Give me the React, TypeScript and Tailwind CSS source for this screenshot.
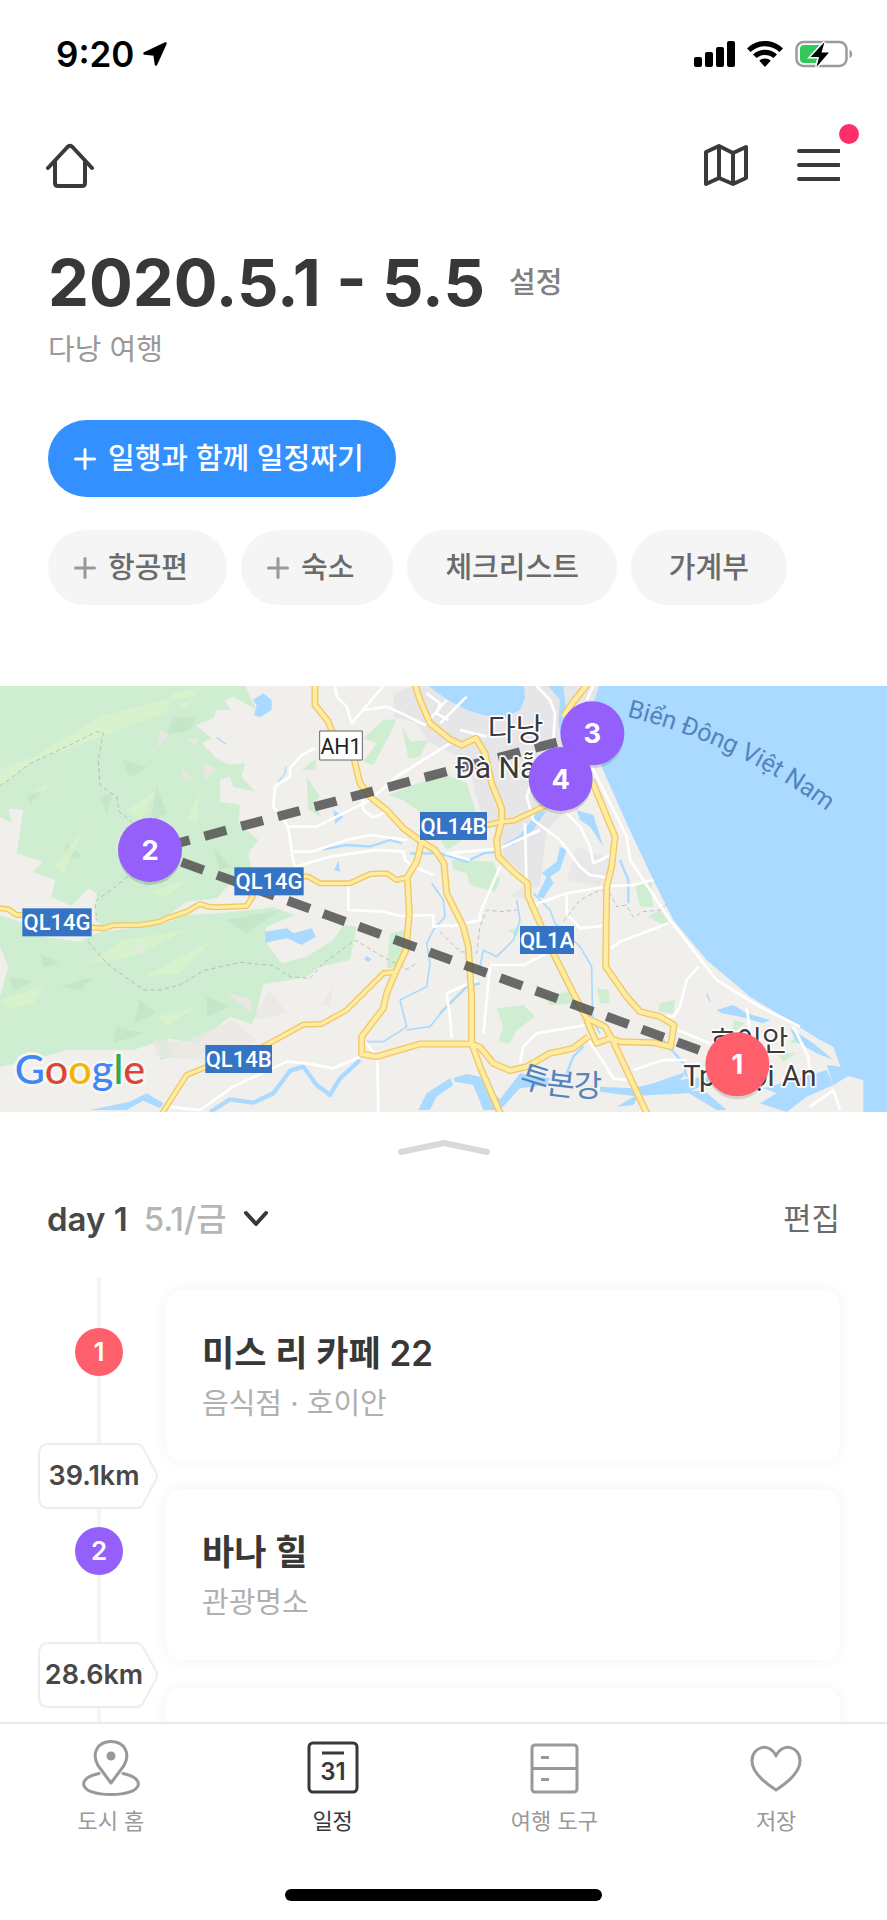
import clsx from 'clsx';
import type { ReactNode } from 'react';

type StopColor = 'red' | 'purple';

interface Stop {
  id: number;
  name?: string;
  detail?: string;
  color: StopColor;
  distance?: string;
}

const stops: Stop[] = [
  { id: 1, name: '미스 리 카페 22', detail: '음식점 · 호이안', color: 'red', distance: '39.1km' },
  { id: 2, name: '바나 힐', detail: '관광명소', color: 'purple', distance: '28.6km' },
  { id: 3, color: 'purple' },
];

const chips = [
  { label: '항공편', add: true },
  { label: '숙소', add: true },
  { label: '체크리스트', add: false },
  { label: '가계부', add: false },
];

const HIGHWAYS = [
  'M945 0 V75 L985 125 1000 165 1062 235 1080 310 1115 355 1160 390 1210 445 1265 485 1305 510 1332 550 1340 640 1390 740 1405 800 1415 950 V1090 L1440 1160 1505 1310',
  'M1265 485 L1250 545 1222 592 1228 700 1218 810 1185 880 1160 940 1150 985 1085 1070 V1122 L1130 1130 1260 1092 H1415 L1440 1102 1480 1150 1530 1172 1580 1160 1650 1120 1720 1105 1765 1070',
  'M1240 0 L1260 60 1290 130 1350 178 1385 195 1428 175 1455 220 1475 310 1505 385 V425 L1490 480 1495 530 1540 575 1582 610 1585 650 1620 730 1660 820 1720 940 1760 1015 1815 1040 1840 1085 1945 1310',
  'M1765 0 L1755 22 1720 65 1690 110 M1775 300 L1845 470 1835 560 1820 620 1817 860 1880 950 1920 995 1980 1010 2022 1035 2012 1100 1960 1088 1860 1085 1830 1075 1790 1090 1760 1020',
];

const MINOR_HIGHWAYS = [
  'M900 588 L925 590 960 610 H1050 L1110 582 1160 580 1190 600 1222 592',
  'M0 685 L25 688 50 705 H90 M270 742 L310 745 340 736 420 735 480 725 500 715 560 695 600 672 625 680 650 682 740 678 758 650 750 640',
  'M480 1310 L560 1185 620 1160 M780 1105 L910 1034 965 1032 1040 990 1150 880 1185 876',
  'M1450 438 L1505 425 1540 422 1630 380 1680 360',
];

const STREETS = [
  'M1150 18 L1055 130 1040 80 1010 50 1005 18',
  'M1095 90 L1160 80 1205 100 1275 135 1340 60',
  'M945 205 L905 225 870 265 870 290 825 320 820 380 865 440 950 440 1110 360 1190 290 1350 190',
  'M865 440 L875 515 935 515 1040 480 1110 465 1220 480 M1060 240 L1085 330 1090 390 1120 412 1160 395',
  'M875 520 L885 560 990 530 1130 510 1210 515 1215 540 1240 560 1300 585',
  'M1045 615 V690 L1150 695 1200 708 1300 705 1300 740 1350 735',
  'M1280 40 L1320 70 1310 100 1345 120 M1320 130 L1400 50 M1380 150 L1460 170',
  'M1610 18 L1650 60 1665 100 1660 180 1600 290 1580 350 1600 420 1680 480 1740 560 1770 585 1820 592',
  'M1780 18 L1760 60 M1775 260 L1880 470 1890 540 2010 720 2095 830 2150 900 2270 975 2400 1040',
  'M1410 540 L1340 520 1500 505 1620 450 M1500 560 L1440 700 1440 720 1350 740',
  'M1600 675 L1700 640 1830 618 1900 615 1960 600 M1700 640 L1700 700 1740 745 1830 735',
  'M1832 805 L1860 785 2005 730 M2095 860 L2060 900 2040 980 2020 1010 1980 1010',
  'M1470 860 L1450 1060 M1470 855 H1570 L1640 820 M1430 900 L1340 940 1350 1010 1355 1075',
  'M1560 1150 L1570 1100 1610 1060 1760 1035 M1765 1080 L1800 1130 1840 1195 1880 1200',
  'M500 1280 L600 1290 700 1220 860 1145 920 1150 1000 1165 1080 1130 M1090 1080 L1132 1130 1135 1296',
  'M2020 1045 L2130 1090 M1900 1170 L1990 1140 2060 1140 M2240 985 L2250 1050 2180 1060',
  'M2380 1040 L2425 1130 2430 1180 M2430 1280 L2500 1230 2520 1290 M1575 430 L1580 640 1610 680',
  'M1700 400 L1740 440 1770 500 1780 550 1840 520',
];

const BORDERS = [
  'M0 318 L95 248 210 195 290 155 310 158 295 240 300 315 350 350 358 395 400 430',
  'M400 575 L340 625 285 665 290 720 M265 785 L320 850 430 930 480 930 540 915 610 872 720 847 820 857 870 890 930 895 970 850 1065 780 1140 825 1220 868 1250 850',
  'M1690 725 L1740 660 1800 630 1830 640 1850 680 1880 675 1900 712 1930 695 1980 690 2000 672',
  'M1320 755 L1380 815 1430 820 1440 740 1460 690 1500 695 1550 690',
];

const SHADE_FACETS = [
  'M520 110 L590 110 570 150 500 165 Z M470 320 L500 400 450 430 Z M370 240 L440 260 400 290 380 280 Z',
  'M80 350 L125 330 95 370 Z M640 500 L690 560 660 570 Z M200 490 L250 530 190 540 Z M120 820 L180 850 130 860 Z',
  'M180 920 L280 890 240 930 Z M420 960 L470 1000 400 1030 Z M620 950 L690 980 620 1010 Z M350 1040 L430 1060 340 1090 Z',
  'M300 350 L340 340 320 400 Z M440 580 L510 600 430 620 Z M30 890 L95 905 40 930 Z M680 720 L840 690 740 760 Z',
];

const LIGHT_FACETS = [
  'M0 320 L90 250 300 170 520 90 580 50 500 60 300 110 100 230 0 270 Z',
  'M520 35 L600 25 560 80 500 90 Z M380 390 L470 330 420 420 Z M160 560 L250 450 190 580 Z',
  'M0 960 L130 920 100 970 20 990 Z M270 850 L370 780 560 750 400 830 Z M430 890 L640 780 540 880 Z',
  'M440 640 L560 600 500 650 Z M560 420 L600 330 590 430 Z M100 340 L150 300 140 330 Z M470 1010 L590 980 500 1040 Z',
];

function Shield({ x, y, width, label }: { x: number; y: number; width: number; label: string }) {
  return (
    <g>
      <rect x={x} y={y} width={width} height={84} fill="#3573c5" />
      <text x={x + width / 2} y={y + 65} textAnchor="middle" fontSize={66} fontWeight={500} fill="#fff">
        {label}
      </text>
    </g>
  );
}

function Pin({ x, y, label, color }: { x: number; y: number; label: string; color: string }) {
  return (
    <g fontFamily="Inter, sans-serif">
      <circle cx={x} cy={y + 10} r={95} fill="#000" opacity={0.12} />
      <circle cx={x} cy={y} r={96} fill={color} />
      <text x={x} y={y + 29} textAnchor="middle" fontSize={82} fontWeight={700} fill="#fff">
        {label}
      </text>
    </g>
  );
}

function TripMap() {
  return (
    <svg
      viewBox="0 18 2661 1278"
      preserveAspectRatio="xMidYMid slice"
      className="block h-[426px] w-full shrink-0"
      fontFamily="Roboto, 'Noto Sans CJK KR', sans-serif"
      strokeLinejoin="round"
      role="img"
      aria-label="여행 지도"
    >
      <rect y="18" width="2661" height="1278" fill="#f0efeb" />

      {/* forest */}
      <g fill="#cfedd0">
        <path d="M0 18 H735 L768 88 700 50 675 60 690 90 650 90 640 115 588 135 635 175 605 190 650 235 690 255 735 250 725 290 765 335 700 320 690 290 660 300 660 365 720 375 715 430 775 480 745 520 755 570 700 600 650 655 560 665 480 722 400 735 310 738 285 720 290 640 265 625 215 678 155 650 165 600 98 575 130 545 50 520 70 390 25 385 35 430 0 410 Z" />
        <path d="M0 705 L60 725 130 770 240 785 300 755 480 735 560 705 650 700 760 690 820 682 885 705 800 740 792 780 845 850 920 830 1000 780 1030 735 1070 740 1050 840 960 860 920 890 840 905 790 912 770 1000 755 1032 690 1010 590 1090 500 1075 520 1130 480 1140 475 1085 400 1110 200 1110 100 1140 0 1160 V950 L25 860 0 800 Z" />
        <path d="M1150 120 L1190 118 1165 170 1120 255 1090 245 1130 190 1090 175 Z M1205 135 L1230 185 1285 180 1260 230 1225 235 Z M920 290 L960 350 940 370 965 410 925 390 Z M950 235 L945 270 905 270 Z" />
        <path d="M1165 345 L1330 280 1400 310 1425 390 1420 460 1340 510 1290 420 1210 360 Z M1355 540 L1480 545 1500 600 1485 635 1410 615 1400 580 1360 570 Z" />
        <path d="M1905 610 L1955 605 1955 650 1960 680 1920 680 Z M1945 710 L1980 690 2005 725 1985 732 Z M1490 985 L1570 975 1605 1010 1550 1050 1530 1090 1495 1085 1510 1040 Z M1600 905 L1640 945 1710 935 1725 970 1650 975 Z M1790 925 L1825 930 1830 970 1800 970 Z" />
        <path d="M1980 970 L2025 960 2020 1000 1975 995 Z M1525 750 L1560 742 1550 770 Z M1170 760 L1220 750 1200 860 1160 865 Z M2200 1020 L2235 1030 2200 1060 Z M2330 1120 L2390 1120 2350 1145 Z M2390 1060 L2400 1090 2370 1090 Z" />
      </g>
      <path d={SHADE_FACETS.join(' ')} fill="#c5e6c8" />
      <path d={LIGHT_FACETS.join(' ')} fill="#daf3cd" opacity="0.8" />
      <g fill="#e9e7e3">
        <path d="M480 150 L507 165 470 205 Z M545 265 L580 300 545 290 Z M415 785 L430 820 410 820 Z M680 940 L750 955 755 1000 Z M610 250 L650 265 615 300 Z M560 180 L595 175 590 195 Z" />
        <path d="M810 930 L860 1000 760 1020 780 980 Z M1000 920 L990 980 965 975 Z M460 1080 L590 1090 620 1140 470 1130 Z M560 1080 L700 1020 770 1080 650 1150 Z" opacity="0.7" />
      </g>

      {/* city blocks */}
      <path
        d="M1180 40 L1240 18 1800 18 1780 140 1790 260 1720 370 1640 450 1620 620 1570 625 1580 590 1510 530 1500 470 1440 390 1400 240 1290 190 1250 130 1180 110 Z"
        fill="#e6e6e8"
      />
      <path d="M1730 500 L1840 540 1800 620 1700 600 Z M1570 620 L1600 660 1530 650 Z" fill="#e8e8e8" />
      <path d="M1330 290 L1400 310 1425 390 1420 455 1350 500 1300 420 Z" fill="#cfedd0" />

      {/* water */}
      <g fill="#aadaff">
        <path d="M1797 18 L1780 70 1775 120 1790 210 1805 260 1880 430 1960 600 2020 720 2120 840 2250 950 2380 1030 2460 1080 2500 1100 2522 1160 2480 1155 2500 1215 2545 1188 2590 1200 V1296 H2661 V18 Z" />
        <path d="M1285 18 L1340 58 1400 90 1460 108 1520 110 1560 90 1575 55 1572 18 Z M1645 18 L1680 60 1675 130 1690 190 1700 110 1690 18 Z" />
        <path d="M790 40 L815 60 815 90 780 112 762 105 770 75 758 60 Z M795 755 L860 745 880 760 935 745 948 770 905 795 860 775 795 788 Z M1000 390 L1030 410 1005 432 Z M1015 540 L1020 575 1003 570 Z M1100 828 L1115 836 1105 846 1092 838 Z" />
        <path d="M270 1290 L390 1265 440 1240 490 1270 480 1285 430 1262 380 1290 Z M1255 1290 L1280 1240 1350 1195 1360 1215 1310 1250 1290 1290 Z" />
        <path d="M1360 1195 L1400 1182 1440 1190 1480 1240 1500 1258 1560 1180 1650 1195 1640 1215 1560 1225 1500 1290 1450 1290 1420 1215 1365 1205 Z" />
        <path d="M1800 1220 L1900 1225 1960 1210 2060 1175 2040 1200 2110 1190 2140 1200 2060 1240 1900 1248 1800 1235 Z M2060 1235 L2110 1230 2180 1290 2150 1290 Z M1850 1280 L1920 1240 1900 1275 Z" />
        <path d="M2150 990 L2200 975 2240 1000 2310 1020 2290 1030 2220 1010 2165 1000 Z M2290 1225 L2380 1200 2480 1170 2500 1215 2420 1250 2360 1296 2280 1270 2330 1240 Z M2370 1045 L2440 1090 2500 1140 2450 1120 2390 1085 Z" />
        <path d="M1500 500 L1560 465 1610 400 1640 390 1600 450 1540 495 Z M1680 500 L1700 510 1680 570 1650 590 1660 610 1630 655 1610 650 1640 590 1625 580 1670 545 Z M1730 390 L1780 405 1810 500 1770 440 1740 420 Z" />
      </g>
      <g fill="none" stroke="#aadaff" strokeWidth="7">
        <path d="M630 1296 L690 1258 760 1268 820 1240 870 1172 910 1160 950 1215 990 1245 1020 1195 1080 1140" strokeWidth="13" />
        <path d="M970 508 L1040 495 1110 500 1170 480 1205 490 M1230 520 L1320 520 1400 545 1450 520 1500 515" />
        <path d="M1295 610 L1330 660 1335 710 1300 750 1280 790 1290 850 1280 920 1200 960 1220 1040 1190 1060 1150 1085 1100 1085 M1220 1050 L1290 1040 1330 990" strokeWidth="5" />
        <path d="M1550 660 L1560 720 1540 780 1490 830 1450 810 1440 860 1455 880 M1600 640 L1650 690 1665 730 1740 800 1775 860 1778 1020 1800 1060" strokeWidth="5" />
        <path d="M1860 540 L1885 600 1885 670 M1700 1180 L1720 1130 1750 1100 M1990 1080 L2050 1150 2060 1190 M1320 1000 L1400 920 1440 910" />
        <path d="M650 172 L678 192 M858 260 L855 280 835 305 M2120 940 L2130 965" strokeWidth="4" />
      </g>

      <g fill="none" stroke="#fff" strokeWidth="8">
        {STREETS.map((d) => (
          <path key={d} d={d} />
        ))}
      </g>
      <g fill="none" stroke="#a5a9a3" strokeWidth="2" strokeDasharray="13 9">
        {BORDERS.map((d) => (
          <path key={d} d={d} />
        ))}
      </g>

      <g fill="none">
        {MINOR_HIGHWAYS.map((d) => (
          <path key={d} d={d} stroke="#efc863" strokeWidth="18" />
        ))}
        {HIGHWAYS.map((d) => (
          <path key={d} d={d} stroke="#efc863" strokeWidth="21" />
        ))}
        {MINOR_HIGHWAYS.map((d) => (
          <path key={d} d={d} stroke="#ffeba1" strokeWidth="10" />
        ))}
        {HIGHWAYS.map((d) => (
          <path key={d} d={d} stroke="#ffeba1" strokeWidth="13" />
        ))}
      </g>

      {/* trip route */}
      <g fill="none" stroke="#4c4c4c" strokeOpacity="0.82" strokeWidth="28">
        <path d="M450 512 L1777 158" strokeDasharray="68 46" strokeDashoffset="-55" />
        <path d="M450 512 L2212 1152" strokeDasharray="70 43" strokeDashoffset="-101" />
      </g>

      <Shield x={703} y={562} width={208} label="QL14G" />
      <Shield x={67} y={685} width={208} label="QL14G" />
      <Shield x={616} y={1095} width={200} label="QL14B" />
      <Shield x={1260} y={396} width={201} label="QL14B" />
      <Shield x={1560} y={738} width={162} label="QL1A" />
      <rect x="959" y="153" width="128" height="87" fill="#fff" stroke="#666" strokeWidth="3" />
      <text x="1023" y="221" textAnchor="middle" fontSize="64" fill="#222">
        AH1
      </text>

      <g fill="#3a3a3a" stroke="#fff" strokeWidth="10" style={{ paintOrder: 'stroke' }}>
        <text x="1463" y="180" fontSize="91">다낭</text>
        <text x="1364" y="293" fontSize="90">Đà Nẵng</text>
        <text x="2128" y="1112" fontSize="86">호이안</text>
        <text x="2050" y="1217" fontSize="87">Tp. Hội An</text>
      </g>
      <defs>
        <path id="sea-label" d="M1880 110 Q2240 195 2540 440" />
        <path id="river-label" d="M1555 1213 Q1660 1262 1840 1246" />
      </defs>
      <g fill="#5583bd">
        <text fontSize="75">
          <textPath href="#sea-label">Biển Đông Việt Nam</textPath>
        </text>
        <text fontSize="93">
          <textPath href="#river-label">투본강</textPath>
        </text>
      </g>

      <text
        x="44"
        y="1211"
        fontSize="124"
        fontWeight="500"
        fontFamily="Lato, sans-serif"
        stroke="#f6f7f3"
        strokeWidth="16"
        style={{ paintOrder: 'stroke' }}
      >
        <tspan fill="#4285f4">G</tspan>
        <tspan fill="#db4437">o</tspan>
        <tspan fill="#f4b400">o</tspan>
        <tspan fill="#4285f4">g</tspan>
        <tspan fill="#34a853">l</tspan>
        <tspan fill="#db4437">e</tspan>
      </text>

      <Pin x={450} y={510} label="2" color="#955ffb" />
      <Pin x={1777} y={160} label="3" color="#955ffb" />
      <Pin x={1682} y={297} label="4" color="#955ffb" />
      <Pin x={2212} y={1153} label="1" color="#ff5f6b" />
    </svg>
  );
}

function StatusBar() {
  return (
    <div className="flex h-[108px] shrink-0 items-center justify-between pr-[34px] pl-14 text-black">
      <div className="flex items-center gap-2">
        <span className="text-[35px] leading-10 font-semibold">9:20</span>
        <svg width="26" height="26" viewBox="0 0 26 26">
          <path d="M23.5 2.5 L2.5 12.5 L12.5 13.5 L14 23.5 Z" fill="currentColor" stroke="currentColor" strokeWidth="2.5" strokeLinejoin="round" />
        </svg>
      </div>
      <div className="flex items-center gap-3">
        <svg width="41" height="26" viewBox="0 0 41 26" fill="currentColor">
          <rect x="0" y="16" width="8" height="10" rx="2" />
          <rect x="11" y="11" width="8" height="15" rx="2" />
          <rect x="22" y="6" width="8" height="20" rx="2" />
          <rect x="33" y="0" width="8" height="26" rx="2" />
        </svg>
        <svg width="36" height="26" viewBox="0 0 36 26" fill="currentColor">
          <path d="M18 0 C25 0 31 2.6 36 7.4 L32.4 11 C28.4 7.3 23.5 5.2 18 5.2 C12.5 5.2 7.6 7.3 3.6 11 L0 7.4 C5 2.6 11 0 18 0 Z" />
          <path d="M18 8.8 C22.7 8.8 26.8 10.6 30 13.5 L26.4 17.1 C24.2 15.1 21.3 13.9 18 13.9 C14.7 13.9 11.8 15.1 9.6 17.1 L6 13.5 C9.2 10.6 13.3 8.8 18 8.8 Z" />
          <path d="M18 17.5 C20.2 17.5 22.2 18.3 23.7 19.7 L18 26 L12.3 19.7 C13.8 18.3 15.8 17.5 18 17.5 Z" />
        </svg>
        <svg width="58" height="30" viewBox="0 0 58 30">
          <rect x="1.5" y="3" width="50" height="24" rx="7" fill="none" stroke="#9b9b9b" strokeWidth="2.5" />
          <path d="M54.5 11 C58 12 58 18 54.5 19 Z" fill="#9b9b9b" />
          <path d="M9 6 H27 L16 18 H23 L21 24 H9 Q5 24 5 20 V10 Q5 6 9 6 Z" fill="#34c759" />
          <path d="M29.5 3 L15.5 18 H24 L21.5 28 L34 13.5 H26.5 Z" fill="#000" stroke="#fff" strokeWidth="3" style={{ paintOrder: 'stroke' }} />
        </svg>
      </div>
    </div>
  );
}

function PlusIcon() {
  return (
    <svg width="22" height="22" viewBox="0 0 22 22" stroke="currentColor" strokeWidth="3" strokeLinecap="round" className="shrink-0">
      <path d="M11 1.5 V20.5 M1.5 11 H20.5" />
    </svg>
  );
}

function TopBar() {
  return (
    <header className="flex h-[116px] shrink-0 items-center justify-between pr-[47px] pl-[46px] text-[#3a3a3a]">
      <button type="button" aria-label="홈">
        <svg width="48" height="46" viewBox="0 0 48 46" fill="none" stroke="currentColor" strokeWidth="4" strokeLinecap="round" strokeLinejoin="round">
          <path d="M2 25 L21.5 4 Q24 1.5 26.5 4 L46 25" />
          <path d="M9 19 V40 Q9 43 12 43 H36 Q39 43 39 40 V19" />
        </svg>
      </button>
      <div className="flex items-center gap-12">
        <button type="button" aria-label="지도">
          <svg width="44" height="44" viewBox="0 0 44 44" fill="none" stroke="currentColor" strokeWidth="4" strokeLinejoin="round">
            <path d="M2 8 L15 2 L29 9 L42 3 V34 L29 40 L15 34 L2 40 Z" />
            <path d="M15 2 V34 M29 9 V40" />
          </svg>
        </button>
        <button type="button" aria-label="메뉴" className="relative">
          <svg width="44" height="34" viewBox="0 0 44 34" stroke="currentColor" strokeWidth="4" strokeLinecap="round">
            <path d="M3 2 H43 M3 16 H43 M3 30 H43" />
          </svg>
          <span className="absolute -top-[25px] -right-[19px] size-5 rounded-full bg-[#fc2f69]" />
        </button>
      </div>
    </header>
  );
}

const badgeColors: Record<StopColor, string> = {
  red: 'bg-[#ff5f6b]',
  purple: 'bg-[#955ffb]',
};

function StopRow({ stop }: { stop: Stop }) {
  return (
    <li className="relative flex items-start pr-[47px] pl-[75px]">
      <span
        className={clsx(
          'mt-[38px] mr-[43px] flex size-12 shrink-0 items-center justify-center rounded-full text-[26px] leading-8 font-semibold text-white',
          badgeColors[stop.color],
        )}
      >
        {stop.name && stop.id}
      </span>
      <article className="h-[171px] min-w-0 flex-1 rounded-2xl bg-white px-9 pt-10 shadow-[0_0_16px_rgba(0,0,0,0.05)]">
        {stop.name && <h2 className="text-[35px] leading-[46px] font-semibold text-[#383838]">{stop.name}</h2>}
        {stop.detail && <p className="mt-2 text-[29px] leading-10 text-[#b0b0b0]">{stop.detail}</p>}
      </article>
      {stop.distance && (
        <div className="absolute top-[153px] left-[38px] z-10 flex h-[66px] w-[120px] items-center justify-center pr-2">
          <svg width="120" height="66" viewBox="0 0 120 66" className="absolute inset-0" fill="#fff" stroke="#ededed" strokeWidth="2">
            <path d="M11 1 H98 Q103 1 105 5 L118 29 Q120 33 118 37 L105 61 Q103 65 98 65 H11 Q1 65 1 55 V11 Q1 1 11 1 Z" />
          </svg>
          <span className="relative text-[27px] leading-8 font-semibold text-[#484848]">{stop.distance}</span>
        </div>
      )}
    </li>
  );
}

function Tab({ label, active, children }: { label: string; active?: boolean; children: ReactNode }) {
  return (
    <a
      href="#"
      aria-current={active ? 'page' : undefined}
      className={clsx('flex flex-1 flex-col items-center text-[22px] leading-8', active ? 'text-[#383838]' : 'text-[#999]')}
    >
      <svg width="60" height="60" viewBox="0 0 60 60" fill="none" stroke="currentColor" strokeWidth="3" strokeLinecap="round" strokeLinejoin="round">
        {children}
      </svg>
      <span className="mt-2">{label}</span>
    </a>
  );
}

function TabBar() {
  return (
    <nav className="relative z-20 h-[198px] shrink-0 border-t-2 border-[#e9e9e9] bg-white pt-[13px]">
      <div className="flex">
        <Tab label="도시 홈">
          <path d="M30 46 L17 28.5 C10 16 17 4.5 30 4.5 C43 4.5 50 16 43 28.5 Z" />
          <circle cx="30" cy="19" r="4.5" fill="currentColor" stroke="none" />
          <path d="M18 36.5 C-5 41 -3 57.5 30 57.5 C63 57.5 65 41 42 36.5" />
        </Tab>
        <Tab label="일정" active>
          <rect x="6" y="6" width="48" height="49" rx="4" />
          <path d="M19 16 H41" strokeLinecap="butt" />
          <text x="30" y="43" textAnchor="middle" fontSize="24" fontWeight="600" fill="currentColor" stroke="none">
            31
          </text>
        </Tab>
        <Tab label="여행 도구">
          <rect x="8" y="8" width="45" height="47" rx="3" />
          <path d="M8 31.5 H53 M17 20.5 H25 M17 42.5 H25" strokeLinecap="butt" />
        </Tab>
        <Tab label="저장">
          <path d="M30 53 C16 44 6 34 6 24 C6 9 24 5 30 19 C36 5 54 9 54 24 C54 34 44 44 30 53 Z" />
        </Tab>
      </div>
      <div className="mx-auto mt-[52px] h-3 w-[317px] rounded-full bg-black" />
    </nav>
  );
}

export default function App() {
  return (
    <div className="flex h-screen flex-col overflow-hidden bg-white font-['Inter','Noto_Sans_CJK_KR',sans-serif]">
      <main className="flex min-h-0 flex-1 flex-col overflow-hidden">
        <StatusBar />
        <TopBar />

        <section className="shrink-0 px-12 pt-6">
          <div className="flex items-center gap-6">
            <h1 className="text-[65px] leading-[70px] font-bold text-[#383838]">2020.5.1 - 5.5</h1>
            <button type="button" className="text-[29px] leading-10 font-medium text-[#808080]">
              설정
            </button>
          </div>
          <p className="mt-3 text-[29px] leading-10 text-[#999]">다낭 여행</p>

          <button
            type="button"
            className="mt-[50px] flex h-[77px] items-center gap-3 rounded-full bg-[#3391ff] pr-8 pl-[26px] text-[29px] leading-10 font-medium text-white"
          >
            <PlusIcon />
            일행과 함께 일정짜기
          </button>
          <div className="mt-[33px] flex gap-[14px]">
            {chips.map(({ label, add }) => (
              <button
                key={label}
                type="button"
                className={clsx(
                  'flex h-[75px] items-center gap-3 rounded-full bg-[#f5f5f5] text-[29px] leading-10 font-medium whitespace-nowrap text-[#6b6b6b]',
                  add ? 'pr-[39px] pl-[26px]' : 'px-[38px]',
                )}
              >
                {add && (
                  <span className="text-[#999]">
                    <PlusIcon />
                  </span>
                )}
                {label}
              </button>
            ))}
          </div>
        </section>

        <div className="mt-[81px] shrink-0">
          <TripMap />
        </div>

        <button type="button" aria-label="지도 접기" className="mt-7 self-center">
          <svg width="92" height="16" viewBox="0 0 92 16" fill="none" stroke="#d9d9d9" strokeWidth="6" strokeLinecap="round" strokeLinejoin="round">
            <path d="M3 12 L46 3 L89 12" />
          </svg>
        </button>

        <div className="mt-[43px] flex shrink-0 items-center justify-between px-[47px] leading-10">
          <button type="button" className="flex items-center text-[33px]">
            <span className="font-semibold text-[#484848]">day 1</span>
            <span className="ml-4 font-medium text-[#b5b5b5]">5.1/금</span>
            <svg width="26" height="18" viewBox="0 0 26 18" fill="none" stroke="#383838" strokeWidth="4" strokeLinecap="round" strokeLinejoin="round" className="ml-4">
              <path d="M3 3 L13 14 L23 3" />
            </svg>
          </button>
          <button type="button" className="text-[31px] text-[#6b6b6b]">
            편집
          </button>
        </div>

        <div className="relative mt-[38px] shrink-0 pt-[13px]">
          <div className="absolute inset-y-0 left-[97px] w-1 bg-[#f5f5f5]" />
          <ol className="flex flex-col gap-7">
            {stops.map((stop) => (
              <StopRow key={stop.id} stop={stop} />
            ))}
          </ol>
        </div>
      </main>
      <TabBar />
    </div>
  );
}
